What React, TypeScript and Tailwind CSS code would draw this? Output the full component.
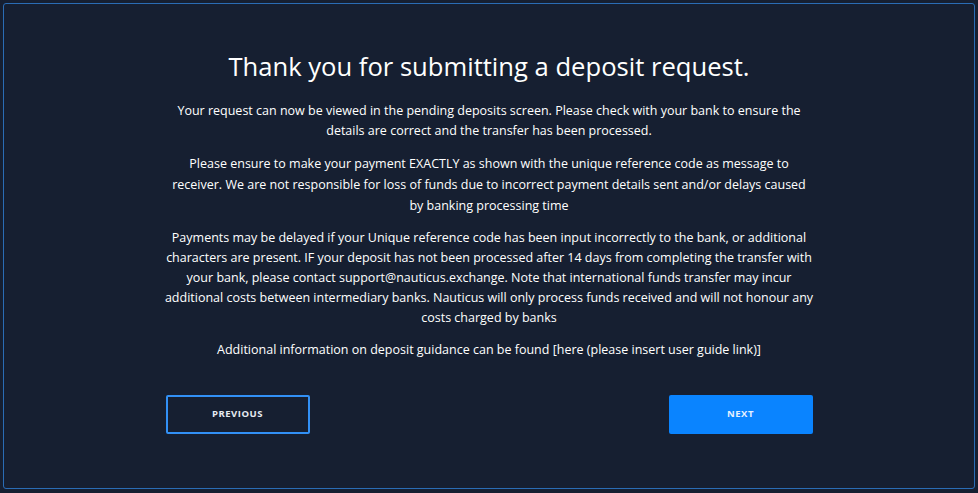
export default function App() {
  return (
    <div
      className="min-h-[493px] w-full bg-[#161f31] pt-[3px] pb-[4px] px-[3px]"
      style={{ fontFamily: '"Open Sans", sans-serif' }}
    >
      <div className="flex h-[486px] flex-col items-center rounded-[3px] border border-[#2a6cb5] bg-[#161f31] pt-[45px]">
        <h1 className="text-[25.6px] leading-[36px] text-white">Thank you for submitting a deposit request.</h1>
        <div className="mt-[16px] w-[647px] space-y-[12px] text-center text-[12.5px] leading-[20px] text-white">
          <p className="px-[4px]">
            Your request can now be viewed in the pending deposits screen. Please check with your bank to ensure the
            details are correct and the transfer has been processed.
          </p>
          <p className="px-[4px] leading-[21px]">
            Please ensure to make your payment EXACTLY as shown with the unique reference code as message to
            receiver. We are not responsible for loss of funds due to incorrect payment details sent and/or delays caused
            by banking processing time
          </p>
          <p className="-mx-[2px]">
            Payments may be delayed if your Unique reference code has been input incorrectly to the bank, or additional
            characters are present. IF your deposit has not been processed after 14 days from completing the transfer with
            your bank, please contact support@nauticus.exchange. Note that international funds transfer may incur
            additional costs between intermediary banks. Nauticus will only process funds received and will not honour any
            costs charged by banks
          </p>
          <p>Additional information on deposit guidance can be found [here (please insert user guide link)]</p>
        </div>
        <div className="mt-[35px] flex w-[647px] justify-between">
          <button className="h-[39px] w-[144px] rounded-[2px] border-2 border-[#3290f5] text-[9.5px] font-bold tracking-[0.5px] text-[#e6ebf2]">
            PREVIOUS
          </button>
          <button className="h-[39px] w-[144px] rounded-[2px] bg-[#0a84ff] text-[9.5px] font-bold tracking-[0.5px] text-[#e6f0ff]">
            NEXT
          </button>
        </div>
      </div>
    </div>
  );
}
